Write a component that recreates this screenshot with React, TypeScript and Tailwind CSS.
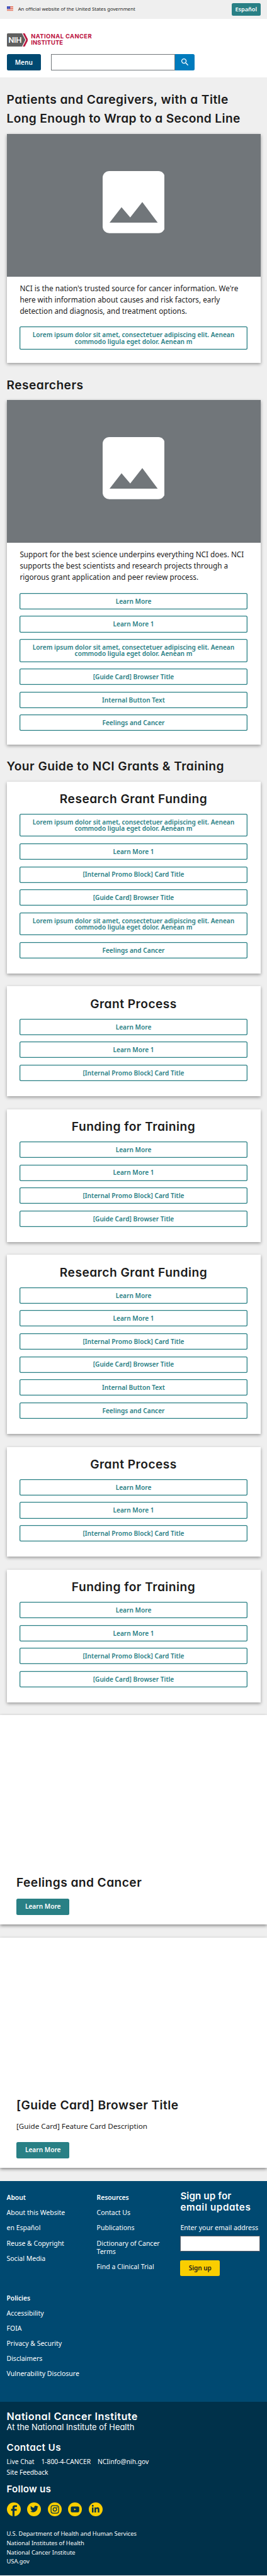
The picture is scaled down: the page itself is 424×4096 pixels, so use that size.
import type { ReactNode } from "react";
import { FaLinkedinIn, FaTwitter } from "react-icons/fa";
import { MdSearch } from "react-icons/md";

const LOREM =
  "Lorem ipsum dolor sit amet, consectetuer adipiscing elit. Aenean commodo ligula eget dolor. Aenean m";

const heading = "font-['Inter',sans-serif] font-semibold [font-feature-settings:'cv11']";

function OutlineButton({ label }: { label: string }) {
  const tall = label === LOREM;
  return (
    <a
      className={
        (tall ? "h-[36.5px]" : "h-[26.15px]") +
        " flex shrink-0 items-center justify-center rounded-[2.5px] px-[14.3px] text-center text-[10.13px] leading-[10.4px] font-semibold text-[#298085] shadow-[inset_0_0_0_1.3px_#298085]"
      }
    >
      {label}
    </a>
  );
}

function ButtonList({ labels }: { labels: string[] }) {
  return (
    <div className="flex flex-col gap-[10.5px]">
      {labels.map((label, i) => (
        <OutlineButton key={i} label={label} />
      ))}
    </div>
  );
}

function Placeholder() {
  return (
    <div className="flex h-[227.1px] items-start justify-center bg-[#71767a] pt-[59.4px]">
      <svg className="size-[98.8px]" viewBox="0 0 98.8 98.8">
        <rect width="98.8" height="98.8" rx="10.6" fill="#fff" />
        <path d="M11 82 L30 57.5 L43.8 73.8 L63 49.3 L87.4 82 Z" fill="#71767a" />
      </svg>
    </div>
  );
}

function ImageCard({ text, labels }: { text: string; labels: string[] }) {
  return (
    <div className="bg-white pb-[21.1px] shadow-[0_2px_5px_rgba(0,0,0,0.36)]">
      <Placeholder />
      <div className="px-[20.9px] pt-[10.3px]">
        <p className="mb-[16.3px] text-[11.76px] leading-[17.67px]">{text}</p>
        <ButtonList labels={labels} />
      </div>
    </div>
  );
}

function SectionTitle({ children }: { children: ReactNode }) {
  return (
    <h2 className={`${heading} h-[59px] pt-[19.7px] text-[19.2px] leading-[30.7px] tracking-[0.44px]`}>
      {children}
    </h2>
  );
}

function GuideCard({ title, labels }: { title: string; labels: string[] }) {
  return (
    <div className="bg-white px-[20.9px] pt-[17.4px] pb-[23.7px] shadow-[0_2px_5px_rgba(0,0,0,0.36)]">
      <h3 className={`${heading} mb-[13.9px] text-center text-[19.2px] leading-5 tracking-[0.46px]`}>{title}</h3>
      <ButtonList labels={labels} />
    </div>
  );
}

function SolidButton({ children }: { children: ReactNode }) {
  return (
    <a className="flex h-[26px] w-[84.4px] items-center justify-center rounded-[2.5px] bg-[#298085] text-[10.13px] font-semibold text-white">
      {children}
    </a>
  );
}

function Flag() {
  return (
    <svg className="mb-[2px] h-[7.2px] w-[10.3px]" viewBox="0 0 16 11">
      <rect width="16" height="11" fill="#fff" />
      <path d="M0 .7h16M0 3h16M0 5.3h16M0 7.7h16M0 10.3h16" stroke="#db3e1f" strokeWidth="1.2" />
      <rect width="8" height="6.6" fill="#1e33b1" />
      <path
        d="M1 1.5h1M3.4 1.5h1M5.8 1.5h1M2.2 3.3h1M4.6 3.3h1M1 5.1h1M3.4 5.1h1M5.8 5.1h1"
        stroke="#fff"
        strokeWidth="1"
      />
    </svg>
  );
}

function FooterList({ title, items }: { title: string; items: string[] }) {
  return (
    <div className="flex flex-col gap-[10.36px] text-[10.5px] leading-[13.7px]">
      <h3 className="text-[10.28px] font-semibold">{title}</h3>
      {items.map((item) => (
        <a key={item}>{item}</a>
      ))}
    </div>
  );
}

function SocialCircle({ children }: { children: ReactNode }) {
  return (
    <a className="flex size-[22.2px] items-center justify-center overflow-hidden rounded-full bg-[#face00] text-[#00314a]">
      {children}
    </a>
  );
}

function Header() {
  return (
    <header>
      <div className="flex h-[30px] items-center bg-[#efefef] px-[10.5px]">
        <Flag />
        <span className="ml-[7.9px] text-[7.72px]">An official website of the United States government</span>
        <a className="ml-auto flex h-[19.6px] w-[45.5px] items-center justify-center rounded-[2.5px] bg-[#298085] text-[9.11px] font-semibold text-white">
          Español
        </a>
      </div>
      <div className="h-[92.7px] px-[10.5px] pt-[22.9px]">
        <div className="flex h-[21.1px]">
          <div className="relative h-[21.1px] w-[38.7px]">
            <svg className="h-[21.1px] w-[33.8px]" viewBox="0 0 33.8 21.1">
              <path d="M1.6 0 H23.8 L29.3 10.55 L23.8 21.1 H1.6 Q0 21.1 0 19.5 V1.6 Q0 0 1.6 0 Z" fill="#606060" />
              <path d="M25.1 0 H28.3 L33.8 10.55 L28.3 21.1 H25.1 L30.6 10.55 Z" fill="#bb1a41" />
            </svg>
            <span className="absolute top-0 left-[2.8px] font-['Roboto',sans-serif] text-[13px] leading-[21.4px] font-medium tracking-[-0.5px] text-white">
              NIH
            </span>
          </div>
          <div className="pt-[0.3px] font-['Inter',sans-serif] text-[9.4px] leading-[10.2px] font-bold text-[#bb0e3d]">
            <div className="tracking-[0.41px]">NATIONAL CANCER</div>
            <div className="tracking-[0.12px]">INSTITUTE</div>
          </div>
        </div>
        <div className="mt-[12.2px] flex h-[26.1px]">
          <button className="w-[54.6px] rounded-[2.5px] bg-[#004971] text-[10.07px] font-semibold text-white">
            Menu
          </button>
          <div className="ml-[15.7px] w-[197.1px] border border-[#71767a] bg-white" />
          <button className="flex w-[31.1px] items-center justify-center rounded-r-[2.5px] bg-[#007bbd] pb-[1.5px] text-white">
            <MdSearch className="size-[15.4px]" />
          </button>
        </div>
      </div>
    </header>
  );
}

function Footer() {
  return (
    <footer className="text-white">
      <div className="flex h-[350.5px] bg-[#004971] pl-[10.5px]">
        <div className="w-[275.9px] pt-[20.1px]">
          <div className="flex h-[159.8px]">
            <div className="w-[143.1px]">
              <FooterList
                title="About"
                items={["About this Website", "en Español", "Reuse & Copyright", "Social Media"]}
              />
            </div>
            <div className="w-[114px]">
              <FooterList
                title="Resources"
                items={["Contact Us", "Publications", "Dictionary of Cancer Terms", "Find a Clinical Trial"]}
              />
            </div>
          </div>
          <FooterList
            title="Policies"
            items={["Accessibility", "FOIA", "Privacy & Security", "Disclaimers", "Vulnerability Disclosure"]}
          />
        </div>
        <div className="w-[127.1px] pt-[14.4px]">
          <h3 className={`${heading} text-[15.2px] leading-[18.4px]`}>
            <span className="block tracking-[0.1px]">Sign up for</span>
            <span className="block tracking-[0.6px]">email updates</span>
          </h3>
          <label className="mt-[15.3px] block text-[10.55px] leading-[14px] whitespace-nowrap">
            Enter your email address
          </label>
          <div className="mt-[5.9px] h-[25.6px] border border-[#565c65] bg-white" />
          <button className="mt-[13.3px] block h-[25.8px] w-[62.7px] rounded-[2.5px] bg-[#face00] text-[10px] font-semibold text-[#1b1b1b]">
            Sign up
          </button>
        </div>
      </div>
      <div className="h-[276.1px] bg-[#00314a] px-[10.5px] pt-[12.8px]">
        <h2 className={`${heading} text-[16.2px] leading-5 tracking-[0.5px]`}>National Cancer Institute</h2>
        <p className="mt-[1.2px] font-['Inter',sans-serif] text-[12.9px] leading-[14px] [font-feature-settings:'cv11']">
          At the National Institute of Health
        </p>
        <h3 className={`${heading} mt-[16.5px] text-[15.2px] leading-[18px] tracking-[0.45px]`}>Contact Us</h3>
        <div className="mt-[4.9px] flex w-[240px] flex-wrap gap-x-[11px] text-[10.25px] leading-[17px]">
          <a>Live Chat</a>
          <a>1-800-4-CANCER</a>
          <a>NCIinfo@nih.gov</a>
          <a>Site Feedback</a>
        </div>
        <h3 className={`${heading} mt-[9px] text-[15.2px] leading-[18px] tracking-[0.18px]`}>Follow us</h3>
        <div className="mt-[11.5px] flex gap-[10.4px]">
          <SocialCircle>
            <svg className="size-full" viewBox="0 0 100 100">
              <path
                d="M40 100V60H30V46H40V36C40 26 46 20 57 20H72V33H62C56 33 54 36 54 40V46H70V60H54V100Z"
                fill="currentColor"
              />
            </svg>
          </SocialCircle>
          <SocialCircle>
            <FaTwitter className="size-[12.8px]" />
          </SocialCircle>
          <SocialCircle>
            <svg className="size-full" viewBox="0 0 100 100" fill="none" stroke="currentColor">
              <rect x="23" y="23" width="54" height="54" rx="14" strokeWidth="5.5" />
              <circle cx="50" cy="50" r="12.5" strokeWidth="5.5" />
              <circle cx="65.5" cy="34.5" r="3.6" fill="currentColor" stroke="none" />
            </svg>
          </SocialCircle>
          <SocialCircle>
            <svg className="size-full" viewBox="0 0 100 100">
              <rect x="20" y="29" width="60" height="42" rx="9" fill="currentColor" />
              <path d="M44 42.5L58 50L44 58Z" fill="#face00" />
            </svg>
          </SocialCircle>
          <SocialCircle>
            <FaLinkedinIn className="size-[13.6px]" />
          </SocialCircle>
        </div>
        <div className="mt-[21.2px] text-[9.31px] leading-[14.8px]">
          <div>U.S. Department of Health and Human Services</div>
          <div>National Institutes of Health</div>
          <div>National Cancer Institute</div>
          <div>USA.gov</div>
        </div>
      </div>
    </footer>
  );
}

const PROMO = "[Internal Promo Block] Card Title";
const GUIDE = "[Guide Card] Browser Title";

export default function App() {
  return (
    <div className="w-[424px] overflow-hidden bg-white font-['Noto_Sans',sans-serif] text-[#1b1b1b]">
      <Header />
      <main className="bg-[#efefef] pb-[20.9px]">
        <div className="px-[10.5px] pt-[20.1px]">
          <h1 className={`${heading} mb-[8.6px] text-[19.2px] leading-[30.7px] whitespace-nowrap`}>
            <span className="block tracking-[0.43px]">Patients and Caregivers, with a Title</span>
            <span className="block tracking-[0.35px]">Long Enough to Wrap to a Second Line</span>
          </h1>
          <ImageCard
            text="NCI is the nation's trusted source for cancer information. We're here with information about causes and risk factors, early detection and diagnosis, and treatment options."
            labels={[LOREM]}
          />
          <SectionTitle>Researchers</SectionTitle>
          <ImageCard
            text="Support for the best science underpins everything NCI does. NCI supports the best scientists and research projects through a rigorous grant application and peer review process."
            labels={["Learn More", "Learn More 1", LOREM, GUIDE, "Internal Button Text", "Feelings and Cancer"]}
          />
          <SectionTitle>Your Guide to NCI Grants &amp; Training</SectionTitle>
          <div className="flex flex-col gap-[20.8px]">
            <GuideCard
              title="Research Grant Funding"
              labels={[LOREM, "Learn More 1", PROMO, GUIDE, LOREM, "Feelings and Cancer"]}
            />
            <GuideCard title="Grant Process" labels={["Learn More", "Learn More 1", PROMO]} />
            <GuideCard title="Funding for Training" labels={["Learn More", "Learn More 1", PROMO, GUIDE]} />
            <GuideCard
              title="Research Grant Funding"
              labels={["Learn More", "Learn More 1", PROMO, GUIDE, "Internal Button Text", "Feelings and Cancer"]}
            />
            <GuideCard title="Grant Process" labels={["Learn More", "Learn More 1", PROMO]} />
            <GuideCard title="Funding for Training" labels={["Learn More", "Learn More 1", PROMO, GUIDE]} />
          </div>
        </div>
        <div className="mt-[20.5px] flex h-[333px] flex-col justify-end bg-white px-[26px] pb-[15.7px] shadow-[0_2px_5px_rgba(0,0,0,0.45)]">
          <h2 className={`${heading} mb-[13.5px] text-[19.2px] leading-6 tracking-[0.43px]`}>Feelings and Cancer</h2>
          <SolidButton>Learn More</SolidButton>
        </div>
        <div className="mt-[21px] flex h-[366.1px] flex-col justify-end bg-white px-[26px] pb-[15.6px] shadow-[0_2px_5px_rgba(0,0,0,0.45)]">
          <h2 className={`${heading} mb-[13.1px] text-[19.2px] leading-6 tracking-[0.42px]`}>
            [Guide Card] Browser Title
          </h2>
          <p className="mb-[15.8px] text-[11.67px] leading-[18px]">[Guide Card] Feature Card Description</p>
          <SolidButton>Learn More</SolidButton>
        </div>
      </main>
      <Footer />
    </div>
  );
}
